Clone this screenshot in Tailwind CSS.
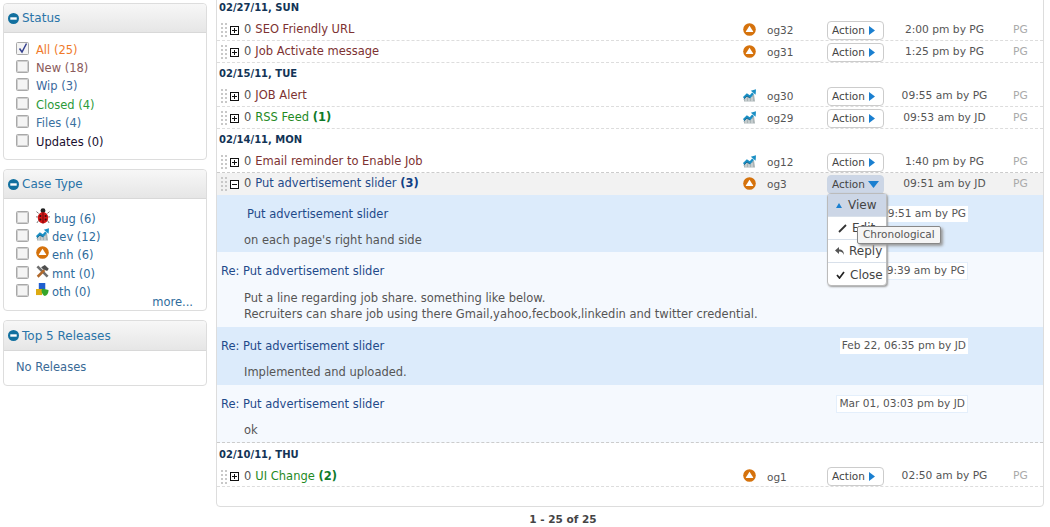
<!DOCTYPE html>
<html lang="en">
<head>
  <meta charset="UTF-8" />
  <title>Tasks</title>
  <script src="https://cdn.jsdelivr.net/npm/@tailwindcss/browser@4"></script>
</head>
<body class="bg-white w-[1050px] h-[527px] overflow-hidden font-['DejaVu_Sans',sans-serif] text-[11.5px] text-[#555]">

  <!-- shared icons -->
  <svg class="hidden">
    <symbol id="minus" viewBox="0 0 12 12"><circle cx="6" cy="6" r="6" fill="#12709f"/><rect x="2.5" y="4.7" width="7" height="2.6" fill="#fff"/></symbol>
    <symbol id="enh" viewBox="0 0 13 13"><circle cx="6.5" cy="6.5" r="6.3" fill="#d5720c"/><path d="M6.500 2.800 10.200 8.400Q10.300 9 9.700 9H3.300Q2.700 9 2.800 8.400z" fill="#fff"/></symbol>
    <symbol id="dev" viewBox="0 0 13 13"><path d="M1 12.500V9L4 6.500 7 8.500 11 5 12 12.500z" fill="#a9b3b5"/><path d="M3 12.500V8M6 12.500V9M9 12.500V8" stroke="#dfe4e5"/><path d="M.7 9 4 5.700 7 7.700 10 4.200" stroke="#1a8fc4" stroke-width="2.400" fill="none"/><path d="M7.800 1.800 13 .3 12.600 5.800z" fill="#1a8fc4"/><path d="M.7 10 4 7 7 9" stroke="#0d5f8a" stroke-width=".8" fill="none"/></symbol>
    <symbol id="bug" viewBox="0 0 16 18"><path d="M3 6 .5 4M2 10H0M3 14l-2 3M13 6l2.500-2M14 10h2M13 14l2 3" stroke="#666" stroke-width="1" fill="none"/><circle cx="8" cy="3" r="2.800" fill="#222"/><ellipse cx="8" cy="11" rx="6" ry="6.500" fill="#d41616"/><path d="M8 4.500V17.500" stroke="#400" stroke-width=".8"/><circle cx="5" cy="9" r="1.200" fill="#311"/><circle cx="11" cy="9" r="1.200" fill="#311"/><circle cx="5" cy="13" r="1.200" fill="#311"/><circle cx="11" cy="13" r="1.200" fill="#311"/></symbol>
    <symbol id="mnt" viewBox="0 0 14 14"><path d="M2.500.5 13.500 11.500 11.500 13.500.5 2.500z" fill="#6f6f6f"/><path d="M.8 11.700 8 4.500 10 6.500 2.800 13.700z" fill="#b0682a"/><path d="M5.500 2.500 9.500 0 13.800 4 12 6.500 7.500 4.500z" fill="#4f4f4f"/></symbol>
    <symbol id="oth" viewBox="0 0 14 14"><path d="M3 0h7v7H3z" fill="#1f5fd0"/><path d="M0 6.500h6.500V13H0z" fill="#dcaa12"/><path d="M6.500 6 13.500 7.500C13.500 11 12 13 9.500 14 7.500 13 6 11 6 8z" fill="#35a52a"/></symbol>
    <symbol id="plus" viewBox="0 0 9 9"><rect x=".5" y=".5" width="8" height="8" fill="#fff" stroke="#111"/><path d="M2 4.500h5M4.500 2v5" stroke="#111"/></symbol>
    <symbol id="less" viewBox="0 0 9 9"><rect x=".5" y=".5" width="8" height="8" fill="#fff" stroke="#111"/><path d="M2 4.500h5" stroke="#111"/></symbol>
    <symbol id="grip" viewBox="0 0 6 14"><g fill="#c8c8c8"><rect y="0" width="2" height="2"/><rect x="4" y="0" width="2" height="2"/><rect y="4" width="2" height="2"/><rect x="4" y="4" width="2" height="2"/><rect y="8" width="2" height="2"/><rect x="4" y="8" width="2" height="2"/><rect y="12" width="2" height="2"/><rect x="4" y="12" width="2" height="2"/></g></symbol>
    <symbol id="box" viewBox="0 0 13 13"><rect x=".5" y=".5" width="12" height="12" rx="1" fill="#f4f4f4" stroke="#a8a8a8"/><rect x="1.500" y="1.500" width="10" height="10" fill="none" stroke="#cfcfcf"/></symbol>
  </svg>

  <div class="flex items-start pl-[3px] pr-[7px] gap-[9px]">

    <!-- Sidebar -->
    <div class="w-[204px] pt-[3px] flex flex-col gap-[9px] shrink-0">

      <div class="h-[157px] border border-[#ddd] rounded-[4px]">
        <div class="h-[29px] flex items-center gap-[3px] pl-[4px] border-b border-[#d8d8d8] bg-gradient-to-b from-[#f7f7f7] to-[#e6e6e6] text-[12px] text-[#2a74a8] rounded-t-[4px]">
          <svg class="w-[11px] h-[11px]"><use href="#minus"/></svg>Status
        </div>
        <div class="pl-[12px] pt-[8px] flex flex-col">
          <div class="h-[18.4px] flex items-center gap-[7px] text-[#f07a2a]">
            <svg class="w-[13px] h-[13px] mb-[4px]" viewBox="0 0 13 13"><rect x=".5" y=".5" width="12" height="12" rx="1" fill="#f4f4f4" stroke="#a8a8a8"/><path d="M3.500 6.500 6 10 10.500 1.500" stroke="#34408f" stroke-width="1.500" fill="none"/></svg>All (25)
          </div>
          <div class="h-[18.4px] flex items-center gap-[7px] text-[#8a5a5a]"><svg class="w-[13px] h-[13px] mb-[4px]"><use href="#box"/></svg>New (18)</div>
          <div class="h-[18.4px] flex items-center gap-[7px] text-[#3a689c]"><svg class="w-[13px] h-[13px] mb-[4px]"><use href="#box"/></svg>Wip (3)</div>
          <div class="h-[18.4px] flex items-center gap-[7px] text-[#2c9a3a]"><svg class="w-[13px] h-[13px] mb-[4px]"><use href="#box"/></svg>Closed (4)</div>
          <div class="h-[18.4px] flex items-center gap-[7px] text-[#3a70a0]"><svg class="w-[13px] h-[13px] mb-[4px]"><use href="#box"/></svg>Files (4)</div>
          <div class="h-[18.4px] flex items-center gap-[7px] text-[#1a1030]"><svg class="w-[13px] h-[13px] mb-[4px]"><use href="#box"/></svg>Updates (0)</div>
        </div>
      </div>

      <div class="h-[142px] border border-[#ddd] rounded-[4px]">
        <div class="h-[29px] flex items-center gap-[3px] pl-[4px] border-b border-[#d8d8d8] bg-gradient-to-b from-[#f7f7f7] to-[#e6e6e6] text-[12px] text-[#2a74a8] rounded-t-[4px]">
          <svg class="w-[11px] h-[11px]"><use href="#minus"/></svg>Case Type
        </div>
        <div class="pl-[12px] pt-[11px] flex flex-col text-[#2f6c9c]">
          <div class="h-[18.4px] flex items-center"><svg class="w-[13px] h-[13px] mr-[7px] mb-[4px]"><use href="#box"/></svg><svg class="w-[14px] h-[16px] mr-[4px] mb-[7px]"><use href="#bug"/></svg>bug (6)</div>
          <div class="h-[18.4px] flex items-center"><svg class="w-[13px] h-[13px] mr-[7px] mb-[4px]"><use href="#box"/></svg><svg class="w-[13px] h-[13px] mr-[3px] mb-[6px]"><use href="#dev"/></svg>dev (12)</div>
          <div class="h-[18.4px] flex items-center"><svg class="w-[13px] h-[13px] mr-[7px] mb-[4px]"><use href="#box"/></svg><svg class="w-[13px] h-[13px] mr-[3px] mb-[6px]"><use href="#enh"/></svg>enh (6)</div>
          <div class="h-[18.4px] flex items-center"><svg class="w-[13px] h-[13px] mr-[7px] mb-[4px]"><use href="#box"/></svg><svg class="w-[13px] h-[13px] mr-[3px] mb-[6px]"><use href="#mnt"/></svg>mnt (0)</div>
          <div class="h-[18.4px] flex items-center"><svg class="w-[13px] h-[13px] mr-[7px] mb-[4px]"><use href="#box"/></svg><svg class="w-[13px] h-[13px] mr-[3px] mb-[6px]"><use href="#oth"/></svg>oth (0)</div>
          <div class="text-right pr-[13px] leading-[12px] -mt-[6px]">more...</div>
        </div>
      </div>

      <div class="h-[66px] border border-[#ddd] rounded-[4px]">
        <div class="h-[30px] flex items-center gap-[3px] pl-[4px] border-b border-[#d8d8d8] bg-gradient-to-b from-[#f7f7f7] to-[#e6e6e6] text-[12px] text-[#2a74a8] rounded-t-[4px]">
          <svg class="w-[11px] h-[11px]"><use href="#minus"/></svg>Top 5 Releases
        </div>
        <div class="pl-[12px] pt-[8px] text-[#3a6a96]">No Releases</div>
      </div>
    </div>

    <!-- Main list -->
    <div class="flex-1 min-w-0">
      <div class="relative w-[828px] h-[511px] -mt-[4px] border border-[#ddd] rounded-[4px]">

        <div class="h-[22px] flex items-center pl-[2px] pb-[2px] text-[10px] font-bold text-[#123456]">02/27/11, SUN</div>
        <div class="h-[22px] pt-[1px] flex items-center border-b border-dashed border-[#ddd]">
          <svg class="w-[6px] h-[14px] ml-[4px]"><use href="#grip"/></svg>
          <svg class="w-[9px] h-[9px] ml-[3px]"><use href="#plus"/></svg>
          <span class="ml-[5px]">0</span><span class="ml-[4px] text-[#7d3232]">SEO Friendly URL</span>
          <svg class="w-[13px] h-[13px] ml-auto mr-[11px] mb-[2px]"><use href="#enh"/></svg>
          <span class="w-[60px] mt-[2px] text-[10.5px]">og32</span>
          <span class="w-[57px] h-[19px] flex items-center justify-between pl-[4px] pr-[8px] border border-[#ccc] rounded-[4px] text-[10.5px] leading-none text-[#444]">Action<svg class="w-[6px] h-[9px]" viewBox="0 0 6 9"><path d="M0 0 6 4.500 0 9z" fill="#1a7fd0"/></svg></span>
          <span class="w-[121px] text-center text-[10.7px]">2:00 pm by PG</span>
          <span class="w-[30px] ml-[8px] text-[10.7px] text-[#aaa]">PG</span>
        </div>
        <div class="h-[22px] pt-[1px] flex items-center border-b border-dashed border-[#ddd]">
          <svg class="w-[6px] h-[14px] ml-[4px]"><use href="#grip"/></svg>
          <svg class="w-[9px] h-[9px] ml-[3px]"><use href="#plus"/></svg>
          <span class="ml-[5px]">0</span><span class="ml-[4px] text-[#7d3232]">Job Activate message</span>
          <svg class="w-[13px] h-[13px] ml-auto mr-[11px] mb-[2px]"><use href="#enh"/></svg>
          <span class="w-[60px] mt-[2px] text-[10.5px]">og31</span>
          <span class="w-[57px] h-[19px] flex items-center justify-between pl-[4px] pr-[8px] border border-[#ccc] rounded-[4px] text-[10.5px] leading-none text-[#444]">Action<svg class="w-[6px] h-[9px]" viewBox="0 0 6 9"><path d="M0 0 6 4.500 0 9z" fill="#1a7fd0"/></svg></span>
          <span class="w-[121px] text-center text-[10.7px]">1:25 pm by PG</span>
          <span class="w-[30px] ml-[8px] text-[10.7px] text-[#aaa]">PG</span>
        </div>

        <div class="h-[22px] flex items-center pl-[2px] pb-[2px] text-[10px] font-bold text-[#123456]">02/15/11, TUE</div>
        <div class="h-[22px] pt-[1px] flex items-center border-b border-dashed border-[#ddd]">
          <svg class="w-[6px] h-[14px] ml-[4px]"><use href="#grip"/></svg>
          <svg class="w-[9px] h-[9px] ml-[3px]"><use href="#plus"/></svg>
          <span class="ml-[5px]">0</span><span class="ml-[4px] text-[#7d3232]">JOB Alert</span>
          <svg class="w-[13px] h-[13px] ml-auto mr-[11px] mb-[2px]"><use href="#dev"/></svg>
          <span class="w-[60px] mt-[2px] text-[10.5px]">og30</span>
          <span class="w-[57px] h-[19px] flex items-center justify-between pl-[4px] pr-[8px] border border-[#ccc] rounded-[4px] text-[10.5px] leading-none text-[#444]">Action<svg class="w-[6px] h-[9px]" viewBox="0 0 6 9"><path d="M0 0 6 4.500 0 9z" fill="#1a7fd0"/></svg></span>
          <span class="w-[121px] text-center text-[10.7px]">09:55 am by PG</span>
          <span class="w-[30px] ml-[8px] text-[10.7px] text-[#aaa]">PG</span>
        </div>
        <div class="h-[22px] pt-[1px] flex items-center border-b border-dashed border-[#ddd]">
          <svg class="w-[6px] h-[14px] ml-[4px]"><use href="#grip"/></svg>
          <svg class="w-[9px] h-[9px] ml-[3px]"><use href="#plus"/></svg>
          <span class="ml-[5px]">0</span><span class="ml-[4px] text-[#1f8a1f]">RSS Feed <b class="text-[#0f7a2a]">(1)</b></span>
          <svg class="w-[13px] h-[13px] ml-auto mr-[11px] mb-[2px]"><use href="#dev"/></svg>
          <span class="w-[60px] mt-[2px] text-[10.5px]">og29</span>
          <span class="w-[57px] h-[19px] flex items-center justify-between pl-[4px] pr-[8px] border border-[#ccc] rounded-[4px] text-[10.5px] leading-none text-[#444]">Action<svg class="w-[6px] h-[9px]" viewBox="0 0 6 9"><path d="M0 0 6 4.500 0 9z" fill="#1a7fd0"/></svg></span>
          <span class="w-[121px] text-center text-[10.7px]">09:53 am by JD</span>
          <span class="w-[30px] ml-[8px] text-[10.7px] text-[#aaa]">PG</span>
        </div>

        <div class="h-[22px] flex items-center pl-[2px] pb-[2px] text-[10px] font-bold text-[#123456]">02/14/11, MON</div>
        <div class="h-[22px] pt-[1px] flex items-center border-b border-dashed border-[#ccc]">
          <svg class="w-[6px] h-[14px] ml-[4px]"><use href="#grip"/></svg>
          <svg class="w-[9px] h-[9px] ml-[3px]"><use href="#plus"/></svg>
          <span class="ml-[5px]">0</span><span class="ml-[4px] text-[#7d3232]">Email reminder to Enable Job</span>
          <svg class="w-[13px] h-[13px] ml-auto mr-[11px] mb-[2px]"><use href="#dev"/></svg>
          <span class="w-[60px] mt-[2px] text-[10.5px]">og12</span>
          <span class="w-[57px] h-[19px] flex items-center justify-between pl-[4px] pr-[8px] border border-[#ccc] rounded-[4px] text-[10.5px] leading-none text-[#444]">Action<svg class="w-[6px] h-[9px]" viewBox="0 0 6 9"><path d="M0 0 6 4.500 0 9z" fill="#1a7fd0"/></svg></span>
          <span class="w-[121px] text-center text-[10.7px]">1:40 pm by PG</span>
          <span class="w-[30px] ml-[8px] text-[10.7px] text-[#aaa]">PG</span>
        </div>
        <div class="h-[22px] flex items-center bg-[#f2f2f2]">
          <svg class="w-[6px] h-[14px] ml-[4px]"><use href="#grip"/></svg>
          <svg class="w-[9px] h-[9px] ml-[3px]"><use href="#less"/></svg>
          <span class="ml-[5px]">0</span><span class="ml-[4px] text-[#1f4a8a]">Put advertisement slider <b class="text-[#123f85]">(3)</b></span>
          <svg class="w-[13px] h-[13px] ml-auto mr-[11px] mb-[2px]"><use href="#enh"/></svg>
          <span class="w-[60px] mt-[2px] text-[10.5px]">og3</span>
          <span class="w-[57px] h-[19px] flex items-center justify-between pl-[4px] pr-[4px] border border-[#ccd6e4] bg-[#ccd6e6] rounded-[4px] text-[10.5px] leading-none text-[#444]">Action<svg class="w-[11px] h-[7px]" viewBox="0 0 11 7"><path d="M0 0H11L5.500 7z" fill="#1a7fd0"/></svg></span>
          <span class="w-[121px] text-center text-[10.7px]">09:51 am by JD</span>
          <span class="w-[30px] ml-[8px] text-[10.7px] text-[#aaa]">PG</span>
        </div>

        <!-- Expanded thread -->
        <div class="h-[57px] bg-[#dcebfb] pt-[10px] pl-[30px] pr-[75px]">
          <div class="h-[17px] flex items-center justify-between">
            <span class="mt-[3px] text-[#1f4a8a]">Put advertisement slider</span>
            <span class="mt-[1px] bg-white px-[2px] text-[10.6px]">Feb 22, 09:51 am by PG</span>
          </div>
          <div class="mt-[10px] -ml-[3px]">on each page's right hand side</div>
        </div>
        <div class="h-[75px] bg-[#f5f9fe] pt-[10px] pl-[4px] pr-[75px]">
          <div class="h-[17px] flex items-center justify-between">
            <span class="mt-[3px] text-[#1f4a8a]">Re: Put advertisement slider</span>
            <span class="mt-[1px] bg-white border border-[#e4effb] px-[2px] text-[10.6px]">Feb 22, 09:39 am by PG</span>
          </div>
          <div class="mt-[11px] ml-[23px] leading-[16px]">Put a line regarding job share. something like below.<br/>Recruiters can share job using there Gmail,yahoo,fecbook,linkedin and twitter credential.</div>
        </div>
        <div class="h-[58px] bg-[#dcebfb] pt-[10px] pl-[4px] pr-[75px]">
          <div class="h-[17px] flex items-center justify-between">
            <span class="mt-[3px] text-[#1f4a8a]">Re: Put advertisement slider</span>
            <span class="mt-[1px] bg-white px-[2px] text-[10.6px]">Feb 22, 06:35 pm by JD</span>
          </div>
          <div class="mt-[10px] ml-[23px]">Implemented and uploaded.</div>
        </div>
        <div class="h-[58px] bg-[#f5f9fe] pt-[10px] pl-[4px] pr-[75px] border-b border-dashed border-[#ccc]">
          <div class="h-[17px] flex items-center justify-between">
            <span class="mt-[3px] text-[#1f4a8a]">Re: Put advertisement slider</span>
            <span class="mt-[1px] bg-white border border-[#e4effb] px-[2px] text-[10.6px]">Mar 01, 03:03 pm by JD</span>
          </div>
          <div class="mt-[10px] ml-[23px]">ok</div>
        </div>

        <div class="h-[22px] flex items-center pl-[2px] text-[10px] font-bold text-[#123456]">02/10/11, THU</div>
        <div class="h-[22px] pt-[2px] flex items-center border-b border-dashed border-[#ddd]">
          <svg class="w-[6px] h-[14px] ml-[4px]"><use href="#grip"/></svg>
          <svg class="w-[9px] h-[9px] ml-[3px]"><use href="#plus"/></svg>
          <span class="ml-[5px]">0</span><span class="ml-[4px] text-[#1f8a1f]">UI Change <b class="text-[#0f7a2a]">(2)</b></span>
          <svg class="w-[13px] h-[13px] ml-auto mr-[11px] mb-[2px]"><use href="#enh"/></svg>
          <span class="w-[60px] mt-[2px] text-[10.5px]">og1</span>
          <span class="w-[57px] h-[19px] flex items-center justify-between pl-[4px] pr-[8px] border border-[#ccc] rounded-[4px] text-[10.5px] leading-none text-[#444]">Action<svg class="w-[6px] h-[9px]" viewBox="0 0 6 9"><path d="M0 0 6 4.500 0 9z" fill="#1a7fd0"/></svg></span>
          <span class="w-[121px] text-center text-[10.7px]">02:50 am by PG</span>
          <span class="w-[30px] ml-[8px] text-[10.7px] text-[#aaa]">PG</span>
        </div>

        <!-- Action menu, opened over the thread -->
        <div class="absolute left-[610px] top-[196px] w-[60px] h-[93px] bg-white border border-[#bbb] rounded-[4px] shadow-[1px_1px_2px_#999] text-[12px] text-[#444] z-10">
          <div class="h-[23px] flex items-center bg-[#ccd6e6] border-b border-[#d8e0ea] pl-[8px]"><svg class="w-[6px] h-[5px] mr-[6px]" viewBox="0 0 6 5"><path d="M3 0 6 5H0z" fill="#1a7fd0"/></svg>View</div>
          <div class="h-[23px] flex items-center border-b border-[#d8e0ea] pl-[10px]"><svg class="w-[9px] h-[9px] mr-[5px]" viewBox="0 0 9 9"><path d="M8 1 1 8" stroke="#333" stroke-width="1.800"/></svg>Edit</div>
          <div class="h-[23px] flex items-center border-b border-[#d8e0ea] pl-[7px]"><svg class="w-[10px] h-[9px] mr-[4px]" viewBox="0 0 10 9"><path d="M4 0 0 3.500 4 7V4.500C7 4.500 8 6 9 8 9 4.500 7.500 2.500 4 2.500z" fill="#555"/></svg>Reply</div>
          <div class="h-[23px] flex items-center pl-[8px]"><svg class="w-[9px] h-[8px] mr-[5px]" viewBox="0 0 9 8"><path d="M1 4 3.500 7 8 1" stroke="#222" stroke-width="1.700" fill="none"/></svg>Close</div>
        </div>

        <!-- Tooltip -->
        <div class="absolute left-[640px] top-[229px] h-[18px] px-[5px] flex items-center bg-[#f5f5f5] border border-[#888] rounded-[2px] shadow-[2px_2px_3px_#999] text-[10.5px] text-[#555] z-20">Chronological</div>
      </div>

      <div class="h-[16px] mt-[5px] flex items-center justify-center text-[10.5px] font-bold text-[#444] pr-[133px]">1 - 25 of 25</div>
    </div>
  </div>
</body>
</html>
